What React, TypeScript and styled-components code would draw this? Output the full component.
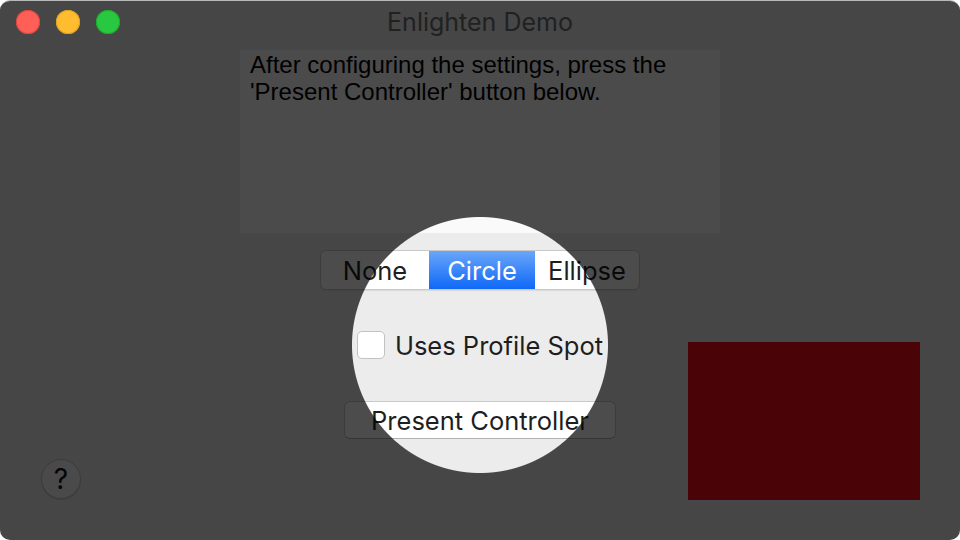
import React from 'react';
import styled, { createGlobalStyle } from 'styled-components';

const GlobalStyle = createGlobalStyle`
  html, body {
    margin: 0;
    padding: 0;
    background: #ffffff;
  }
  #root {
    width: 960px;
    height: 540px;
  }
`;

const sysFont = `Inter, Roboto, "Noto Sans", sans-serif`;

const App = () => {
  return (
    <>
      <GlobalStyle />
      <Window>
        <TitleBar>
          <Lights>
            <Light color="#fe5f57" border="#e0443e" />
            <Light color="#febc2e" border="#dea123" />
            <Light color="#28c840" border="#1aab29" />
          </Lights>
          <Title>Enlighten Demo</Title>
        </TitleBar>
        <Content>
          <InfoBox>
            After configuring the settings, press the
            <br />
            'Present Controller' button below.
          </InfoBox>
          <Segmented>
            <Segment width={108}>None</Segment>
            <Segment width={106} selected>
              Circle
            </Segment>
            <Segment width={104}>Ellipse</Segment>
          </Segmented>
          <CheckRow>
            <CheckBox />
            <CheckLabel>Uses Profile Spot</CheckLabel>
          </CheckRow>
          <PushButton>Present Controller</PushButton>
          <HelpButton>?</HelpButton>
          <Preview />
        </Content>
        <Spotlight />
      </Window>
    </>
  );
};

export default App;

const Window = styled.div`
  position: relative;
  width: 960px;
  height: 540px;
  border-radius: 10px;
  overflow: hidden;
  background: #ececec;
  display: flex;
  flex-direction: column;
  border-top: 1px solid #b9b9b9;
  box-sizing: border-box;
`;

const TitleBar = styled.div`
  position: relative;
  height: 43px;
  flex-shrink: 0;
  display: flex;
  align-items: center;
  justify-content: center;
`;

const Lights = styled.div`
  position: absolute;
  left: 16px;
  top: 9px;
  z-index: 2;
  display: flex;
  gap: 16px;
`;

const Light = styled.span<{ color: string; border: string }>`
  width: 24px;
  height: 24px;
  border-radius: 50%;
  background: ${({ color }) => color};
  box-shadow: inset 0 0 0 1px ${({ border }) => border};
`;

const Title = styled.div`
  font-family: ${sysFont};
  font-size: 25px;
  color: #6e6e6e;
  margin-top: -2px;
`;

const Content = styled.div`
  flex: 1;
  display: grid;
  grid-template-columns: 1fr 480px 1fr;
  grid-template-rows: auto auto auto auto 1fr;
  padding-top: 6px;
`;

const InfoBox = styled.div`
  grid-column: 2;
  grid-row: 1;
  height: 183px;
  box-sizing: border-box;
  background: #fafafa;
  padding: 1px 10px;
  font-family: 'Liberation Sans', Arial, sans-serif;
  font-size: 24px;
  line-height: 27px;
  color: #000;
`;

const Segmented = styled.div`
  grid-column: 2;
  grid-row: 2;
  justify-self: center;
  margin-top: 17px;
  display: flex;
  height: 40px;
  box-sizing: border-box;
  border: 1px solid #c9c9c9;
  border-radius: 6px;
  background: #fff;
  overflow: hidden;
  box-shadow: 0 1px 1px rgba(0, 0, 0, 0.08);
`;

const Segment = styled.div<{ width: number; selected?: boolean }>`
  width: ${({ width }) => width}px;
  display: flex;
  align-items: center;
  justify-content: center;
  font-family: ${sysFont};
  font-size: 25.5px;
  color: ${({ selected }) => (selected ? '#fff' : '#1e1e1e')};
  background: ${({ selected }) => (selected ? 'linear-gradient(#69a6fa, #0f68f7)' : 'transparent')};
`;

const CheckRow = styled.div`
  grid-column: 2;
  grid-row: 3;
  justify-self: center;
  margin-top: 41px;
  display: flex;
  align-items: center;
  gap: 10px;
  height: 28px;
`;

const CheckBox = styled.span`
  width: 28px;
  height: 28px;
  box-sizing: border-box;
  border: 1px solid #c2c2c2;
  border-radius: 5px;
  background: #fff;
`;

const CheckLabel = styled.span`
  font-family: ${sysFont};
  font-size: 25.5px;
  color: #1e1e1e;
`;

const PushButton = styled.div`
  grid-column: 2;
  grid-row: 4;
  justify-self: center;
  margin-top: 42px;
  width: 272px;
  height: 38px;
  box-sizing: border-box;
  display: flex;
  align-items: center;
  justify-content: center;
  border: 1px solid #c9c9c9;
  border-bottom-color: #b2b2b2;
  border-radius: 6px;
  background: #fff;
  font-family: ${sysFont};
  font-size: 25.5px;
  color: #1e1e1e;
`;

const HelpButton = styled.div`
  grid-column: 1;
  grid-row: 5;
  align-self: end;
  justify-self: start;
  margin: 0 0 41px 41px;
  width: 40px;
  height: 40px;
  box-sizing: border-box;
  border-radius: 50%;
  border: 1px solid #c4c4c4;
  background: #f7f7f7;
  box-shadow: 0 1px 1px rgba(0, 0, 0, 0.12);
  display: flex;
  align-items: center;
  justify-content: center;
  font-family: ${sysFont};
  font-size: 28px;
  color: #111;
`;

const Preview = styled.div`
  grid-column: 2 / 4;
  grid-row: 3 / 6;
  justify-self: end;
  align-self: start;
  margin: 52px 40px 0 0;
  width: 232px;
  height: 158px;
  background: #f70d1b;
`;

const Spotlight = styled.div`
  position: absolute;
  left: 0;
  right: 0;
  bottom: 0;
  top: 0;
  z-index: 1;
  pointer-events: none;
  background: radial-gradient(
    circle 129px at 480px 344px,
    transparent 127.5px,
    rgba(0, 0, 0, 0.7) 128.5px
  );
`;
